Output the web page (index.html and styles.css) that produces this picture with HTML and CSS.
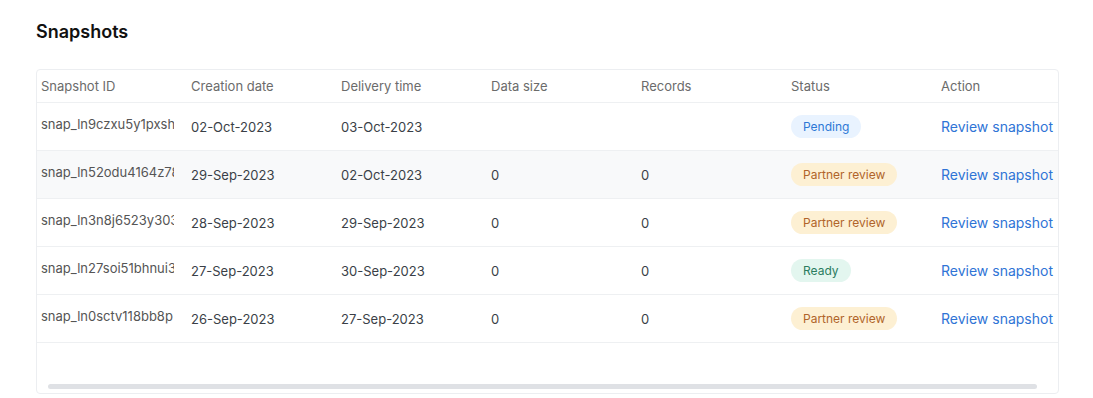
FILE: index.html
```html
<!doctype html>
<html>

<head>
   <meta charset="utf-8">
   <title>Snapshots</title>
   <link rel="stylesheet" href="styles.css">
</head>

<body>
   <div class="page">
      <h2 class="title">Snapshots</h2>

      <div class="tableBox">
         <div class="tableScroll">
            <table class="snapTable">
               <thead>
                  <tr>
                     <th>Snapshot ID</th>
                     <th>Creation date</th>
                     <th>Delivery time</th>
                     <th>Data size</th>
                     <th>Records</th>
                     <th>Status</th>
                     <th>Action</th>
                  </tr>
               </thead>
               <tbody>
                  <tr>
                     <td><span class="snapId">snap_ln9czxu5y1pxsh</span></td>
                     <td>02-Oct-2023</td>
                     <td>03-Oct-2023</td>
                     <td></td>
                     <td></td>
                     <td><span class="badge pending">Pending</span></td>
                     <td><a class="review" href="#">Review snapshot →</a></td>
                  </tr>
                  <tr class="hover">
                     <td><span class="snapId">snap_ln52odu4164z78</span></td>
                     <td>29-Sep-2023</td>
                     <td>02-Oct-2023</td>
                     <td>0</td>
                     <td>0</td>
                     <td><span class="badge partner">Partner review</span></td>
                     <td><a class="review" href="#">Review snapshot →</a></td>
                  </tr>
                  <tr>
                     <td><span class="snapId">snap_ln3n8j6523y303</span></td>
                     <td>28-Sep-2023</td>
                     <td>29-Sep-2023</td>
                     <td>0</td>
                     <td>0</td>
                     <td><span class="badge partner">Partner review</span></td>
                     <td><a class="review" href="#">Review snapshot →</a></td>
                  </tr>
                  <tr>
                     <td><span class="snapId">snap_ln27soi51bhnui3</span></td>
                     <td>27-Sep-2023</td>
                     <td>30-Sep-2023</td>
                     <td>0</td>
                     <td>0</td>
                     <td><span class="badge ready">Ready</span></td>
                     <td><a class="review" href="#">Review snapshot →</a></td>
                  </tr>
                  <tr>
                     <td><span class="snapId">snap_ln0sctv118bb8p</span></td>
                     <td>26-Sep-2023</td>
                     <td>27-Sep-2023</td>
                     <td>0</td>
                     <td>0</td>
                     <td><span class="badge partner">Partner review</span></td>
                     <td><a class="review" href="#">Review snapshot →</a></td>
                  </tr>
               </tbody>
            </table>
         </div>
         <div class="scrollTrack">
            <div class="scrollThumb"></div>
         </div>
      </div>
   </div>
</body>

</html>
```

FILE: styles.css
```css
html,
body {
   padding: 0;
   margin: 0;
   background: #fff;
   font-family: Inter, "Noto Sans", sans-serif;
   color: #333;
}

.page {
   padding: 20px 34px 0 36px;
}

.title {
   margin: 0 0 25px 0;
   font-size: 18px;
   font-weight: 600;
   line-height: 24px;
   color: #111;
}

.tableBox {
   border: 1px solid #eceef1;
   border-radius: 4px;
   height: 323px;
   display: flex;
   flex-direction: column;
   overflow: hidden;
}

.tableScroll {
   flex: 1;
   overflow: hidden;
}

.snapTable {
   border-collapse: collapse;
   table-layout: fixed;
   width: 1050px;
}

.snapTable th,
.snapTable td {
   width: 146px;
   padding: 0 0 0 4px;
   text-align: left;
   white-space: nowrap;
   border-bottom: 1px solid #eef0f2;
}

.snapTable th {
   height: 32px;
   font-size: 13px;
   font-weight: 400;
   color: #6b6b6b;
}

.snapTable td {
   height: 47px;
   font-size: 13px;
   color: #3a3f47;
}

.snapTable tr.hover td {
   background: #f8f9fa;
}

.snapId {
   display: block;
   width: 133px;
   overflow: hidden;
   font-size: 13px;
   color: #555;
   margin-top: -5px;
}

.badge {
   display: inline-block;
   padding: 4px 12px;
   border-radius: 12px;
   font-size: 12px;
   line-height: 15px;
}

.badge.pending {
   background: #e9f3ff;
   color: #2d78d6;
}

.badge.partner {
   background: #fdf0d3;
   color: #b0642a;
}

.badge.ready {
   background: #e3f6ef;
   color: #2b7d5f;
}

.review {
   color: #2f74d6;
   text-decoration: none;
   font-size: 14px;
}

.scrollTrack {
   height: 5px;
   padding: 0 21px 4px 11px;
}

.scrollThumb {
   height: 5px;
   border-radius: 3px;
   background: #dfe1e5;
}
```
